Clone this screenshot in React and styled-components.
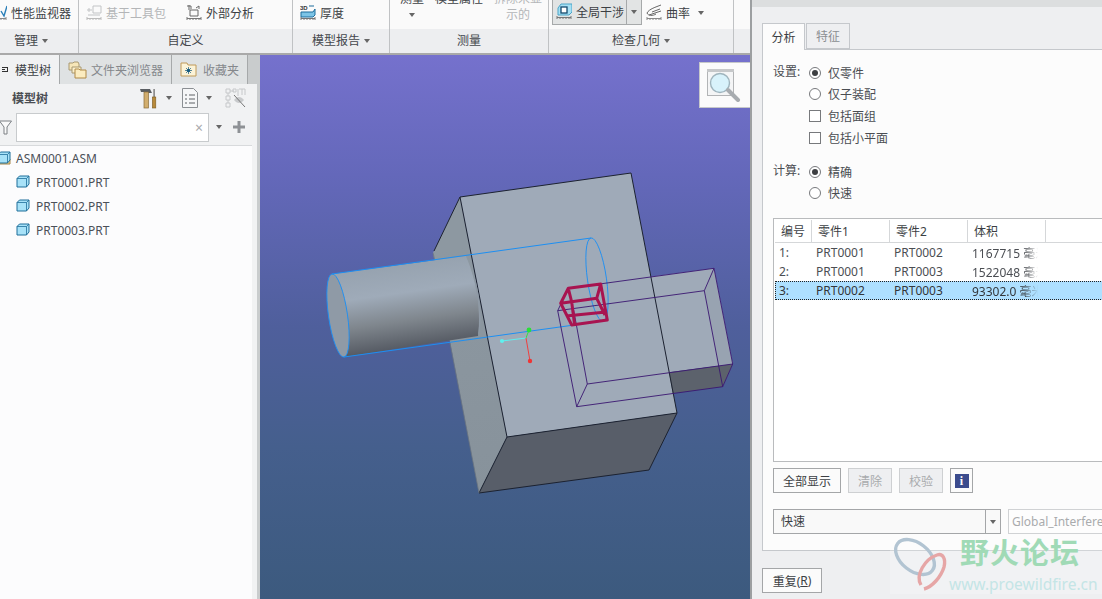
import React from "react";
import styled, { createGlobalStyle } from "styled-components";

const Global = createGlobalStyle`
  html, body { margin: 0; padding: 0; background: #eeeff1; }
  body { font-family: "Noto Sans", "Noto Sans CJK SC", sans-serif; font-size: 12px; color: #3c3f44; }
  * { box-sizing: border-box; }
`;

const Page = styled.div`display: flex; width: 1102px; height: 599px; overflow: hidden;`;
const Main = styled.div`width: 750px; display: flex; flex-direction: column; flex: none;`;

/* ---------- ribbon ---------- */
const Ribbon = styled.div`display: flex; height: 55px; flex: none; border-bottom: 2px solid #a9a9a9; overflow: hidden;`;
const Group = styled.div`
  width: ${p => p.$w}px; flex: none; display: flex; flex-direction: column;
  border-right: 1px solid #c0c2c4; overflow: hidden;
  &:last-child { border-right: none; }
`;
const Tools = styled.div`
  height: 29px; flex: none; display: flex; align-items: center;
  background: #fafafa; padding: 0 0 3px ${p => p.$pl || 0}px; gap: ${p => p.$gap || 0}px;
`;
const GroupLabel = styled.div`
  flex: 1; background: #edeef0; display: flex; align-items: center; justify-content: center;
  gap: 4px; line-height: 24px; color: #44474c; padding-right: ${p => p.$pr || 0}px;
`;
const Caret = styled.span`
  display: inline-block; width: 0; height: 0; flex: none;
  border-left: 3.5px solid transparent; border-right: 3.5px solid transparent;
  border-top: 4px solid ${p => p.$c || "#666"};
`;
const Tool = styled.div`
  display: flex; align-items: center; gap: 4px; flex: none; white-space: nowrap;
  color: ${p => (p.$off ? "#b4b6b8" : "#3c3f44")};
  margin-left: ${p => p.$ml || 0}px;
`;
const TallTool = styled.div`
  display: flex; flex-direction: column; align-items: center; flex: none; align-self: flex-start;
  width: ${p => p.$w}px; margin-top: -9px; line-height: 16px; text-align: center;
  color: ${p => (p.$off ? "#b4b6b8" : "#3c3f44")};
`;
const CaretLine = styled.div`height: 16px; display: flex; align-items: center;`;
const SplitButton = styled.div`
  display: flex; height: 26px; width: 90px; margin-top: -1px; align-self: flex-start; flex: none;
  background: #e2e4e4; border: 1px solid #a6a9aa;
`;
const SplitMain = styled.div`
  width: 74px; flex: none; display: flex; align-items: center; gap: 4px; padding-left: 3px;
  border-right: 1px solid #a6a9aa; white-space: nowrap;
`;
const SplitArrow = styled.div`flex: 1; display: flex; align-items: center; justify-content: center;`;

/* ---------- body ---------- */
const Body = styled.div`flex: 1; display: flex; min-height: 0;`;
const LeftPanel = styled.div`
  width: 260px; flex: none; display: flex; flex-direction: column; background: #f1f2f3;
  border-right: 3px solid #c9cccd; overflow: hidden;
`;
const TabStrip = styled.div`display: flex; height: 29px; flex: none; background: #c9cccd;`;
const PanelTab = styled.div`
  width: ${p => p.$w}px; flex: none; display: flex; align-items: center; gap: ${p => p.$gap || 4}px;
  padding-left: ${p => p.$pl}px; white-space: nowrap;
  color: ${p => (p.$on ? "#3c3f44" : "#85888c")};
  background: ${p => (p.$on ? "#f1f2f3" : "#dfe2e3")};
  border-right: 1px solid #a6a9aa;
`;
const PinMark = styled.span`
  height: 5px; flex: none; position: relative;
  border: 1px solid #333; border-left: none;
  background: linear-gradient(#333,#333) 0 50%/3px 1px no-repeat;
  width: 6px; margin-left: 2px;
`;
const HeadRow = styled.div`
  height: 28px; flex: none; display: flex; align-items: center; padding-left: 12px;
`;
const HeadTitle = styled.div`font-weight: 700; color: #4a4d52; width: 128px; flex: none;`;
const HeadGap = styled.span`width: ${p => p.$w}px; flex: none;`;
const FilterRow = styled.div`height: 30px; flex: none; display: flex; align-items: center;`;
const SearchBox = styled.div`
  width: 193px; height: 29px; margin-left: 4px; flex: none; background: #fff;
  border: 1px solid #c8cbcd; display: flex; align-items: center; justify-content: flex-end;
  padding-right: 5px; color: #a9abad; font-size: 14px; 
`;
const Tree = styled.div`
  flex: 1; margin-right: 5px; margin-top: 3px; background: #fcfcfd; border-top: 1px solid #d8dadc;
`;
const TreeRow = styled.div`
  height: 24px; display: flex; align-items: center; gap: ${p => p.$gap}px; padding-left: ${p => p.$pl}px;
  margin-left: ${p => p.$ml || 0}px; color: #4b5058;
`;

const Viewport = styled.div`
  flex: 1; position: relative; overflow: hidden;
  background: linear-gradient(180deg, #7571cd 0%, #6468ba 22%, #4f5f9c 50%, #455f8d 72%, #3c5a7e 100%);
`;
const SceneSvg = styled.svg`display: block; width: 100%; height: 100%;`;
const ZoomBadge = styled.div`
  position: absolute; right: 0; top: 7px; width: 51px; height: 46px; background: #fbfbfb;
  border: 1px solid #c6c8ca; border-right: none;
`;

/* ---------- dialog ---------- */
const Dialog = styled.div`
  flex: 1; position: relative; background: #eeeff1; border-left: 2px solid #9c9fa1;
  display: flex; flex-direction: column; overflow: hidden;
`;
const DialogTop = styled.div`height: 7px; flex: none; background: #dcdedf;`;
const DTabs = styled.div`display: flex; margin: 16px 0 0 10px; height: 26px; flex: none;`;
const DTab = styled.div`
  display: flex; align-items: center; justify-content: center; flex: none;
  width: ${p => p.$w}px; height: ${p => (p.$on ? 27 : 26)}px;
  background: ${p => (p.$on ? "#fcfcfc" : "#eeeff1")};
  border: 1px solid #c5c8cc; border-bottom: ${p => (p.$on ? "none" : "1px solid #c5c8cc")};
  color: ${p => (p.$on ? "#3c3f44" : "#8b8e92")}; position: relative; z-index: 1;
  margin-right: ${p => (p.$on ? 1 : 0)}px;
`;
const DPanel = styled.div`
  margin-left: 10px; width: 360px; height: 502px; flex: none; background: #fcfcfc;
  border: 1px solid #c5c8cc; padding: 12px 0 0 10px;
`;
const OptionGroup = styled.div`display: flex; margin-bottom: ${p => p.$mb || 0}px;`;
const OptionLabel = styled.div`width: 36px; flex: none; line-height: 20px; color: #4a4d52;`;
const OptionList = styled.div`display: flex; flex-direction: column;`;
const Option = styled.div`
  height: ${p => p.$h}px; display: flex; align-items: center; gap: 7px; color: #4a4d52;
`;
const Radio = styled.span`
  width: 12px; height: 12px; border-radius: 50%; border: 1px solid #77797c; background: #fff; flex: none;
  display: flex; align-items: center; justify-content: center;
  &::after { content: ""; width: 6px; height: 6px; border-radius: 50%; background: ${p => (p.$on ? "#3d3f42" : "transparent")}; }
`;
const Check = styled.span`width: 12px; height: 12px; border: 1px solid #77797c; background: #fff; flex: none;`;

const ListBox = styled.div`
  width: 345px; height: 244px; background: #fff; border: 1px solid #b9bbbd; padding: 1px 0 0 1px; flex: none;
`;
const rowGrid = `display: grid; grid-template-columns: 37px 78px 78px 78px 1fr;`;
const ListHead = styled.div`${rowGrid} height: 23px; border-bottom: 1px solid #d5d7d9;`;
const HeadCell = styled.div`
  display: flex; align-items: center; padding-left: 6px; color: #3c3f44;
  border-right: 1px solid #d5d7d9;
  &:last-child { border-right: none; }
`;
const ListRow = styled.div`
  ${rowGrid} height: 19px; align-items: center; color: #4b4e53;
  ${p => p.$sel && `background: #aee0ff; outline: 1px dotted #222; outline-offset: -1px; color: #33363a;`}
`;
const RowCell = styled.div`padding-left: 4px; white-space: nowrap; overflow: hidden;`;
const FadeCell = styled(RowCell)`
  width: 70px;
  mask-image: linear-gradient(90deg, #000 ${p => p.$solid}px, transparent 70px);
`;
const ButtonRow = styled.div`display: flex; gap: 7px; margin-top: 6px;`;
const Btn = styled.div`
  width: ${p => p.$w}px; height: 25px; flex: none; display: flex; align-items: center; justify-content: center;
  border: 1px solid ${p => (p.$off ? "#ced0d2" : "#a4a6a8")}; background: ${p => (p.$off ? "#eeeff1" : "#fbfbfb")};
  color: ${p => (p.$off ? "#a9abad" : "#3c3f44")};
`;
const InfoGlyph = styled.span`
  width: 14px; height: 14px; background: #3c4c8e; color: #fff; font: 700 12px/14px "Liberation Serif", serif;
  text-align: center;
`;
const ComboRow = styled.div`display: flex; gap: 7px; margin-top: 16px;`;
const Combo = styled.div`
  width: 228px; height: 25px; flex: none; display: flex; border: 1px solid #a4a6a8; background: #f9f9f9;
`;
const ComboText = styled.div`flex: 1; padding-left: 7px; line-height: 24px; color: #3c3f44;`;
const ComboArrow = styled.div`
  width: 15px; flex: none; border-left: 1px solid #a4a6a8; display: flex; align-items: center; justify-content: center;
`;
const NameField = styled.div`
  width: 110px; height: 25px; flex: none; border: 1px solid #d0d2d4; background: #fdfdfd; padding-left: 3px;
  line-height: 23px; color: #a9abad; white-space: nowrap; overflow: hidden;
`;
const Footer = styled.div`margin: 17px 0 0 10px;`;
const Watermark = styled.div`
  position: absolute; left: 138px; top: 534px; width: 214px; height: 60px; background: rgba(255,255,255,.22);
  pointer-events: none;
`;
const WmLogo = styled.svg`position: absolute; left: 1px; top: 1px;`;
const WmTitle = styled.div`
  position: absolute; left: 70px; top: 1px; font: 700 29px/32px "Noto Sans CJK SC", sans-serif; letter-spacing: 1px;
  color: #a0dab6; white-space: nowrap;
`;
const WmUrl = styled.div`
  position: absolute; left: 59px; top: 40px; font: 400 15.5px/20px "Noto Sans", sans-serif; color: #c4e5e6; white-space: nowrap;
`;

/* ---------- icons ---------- */
const Ruler = () => <path d="M1 14.5H15M1 13v3M4 14v2M7 14v2M10 14v2M13 14v2M15 13v3" fill="none" stroke="currentColor" strokeWidth="1" />;
const Ico = styled.svg`flex: none; display: block; color: ${p => p.$c || "#666"}; margin: ${p => p.$m || 0};`;

const IconMonitor = () => (
  <Ico width="16" height="18" viewBox="0 0 16 18" $c="#888"><path d="M10 7l3 5 3-10" fill="none" stroke="#2b7fb8" strokeWidth="1.4" /><Ruler /></Ico>
);
const IconToolkit = () => (
  <Ico width="16" height="18" viewBox="0 0 16 18" $c="#bbb"><path d="M7 2h8v7H7zM1 6h5M3 4v4M2 11h12" fill="none" stroke="#c2c4c6" /><Ruler /></Ico>
);
const IconExternal = () => (
  <Ico width="16" height="18" viewBox="0 0 16 18" $c="#777"><path d="M1 2h4v3M4 6h8v6H4zM10 4l3-2v3M3 1v5" fill="none" stroke="#666" /><Ruler /></Ico>
);
const IconThick = () => (
  <Ico width="16" height="18" viewBox="0 0 16 18" $c="#777">
    <text x="0" y="5.5" fontSize="6" fontWeight="700" fontFamily="Liberation Sans" fill="#333">3D</text>
    <path d="M9 2h5M1 8h12l2-3v6l-2 2H1z" fill="#7cc4e6" stroke="#1d6c9c" /><Ruler />
  </Ico>
);
const IconInterf = () => (
  <Ico width="16" height="18" viewBox="0 0 16 18" $c="#777">
    <path d="M5 1h11v8l-3 3H2V5z" fill="#a6e0f4" stroke="#4aa5c8" /><rect x="5" y="4" width="6" height="6" fill="#fff" stroke="#134a6e" strokeWidth="1.3" /><Ruler />
  </Ico>
);
const IconCurv = () => (
  <Ico width="16" height="18" viewBox="0 0 16 18" $c="#888">
    <path d="M15 1C10 3 3 5 1 9c1 3 6 3 9 1M3 11l12-4M6 8l8-3" fill="none" stroke="#666" /><Ruler />
  </Ico>
);
const IconFolders = () => (
  <Ico width="19" height="19" viewBox="0 0 19 19">
    <path d="M1 3h4l1-1h4l1 2v6H1z" fill="#f6e6b8" stroke="#a89870" /><path d="M4 7h9v6H4z" fill="#fbf0cc" stroke="#a89870" />
    <path d="M7 9h4l1 1h6v8H7z" fill="#fbecc0" stroke="#b08a48" />
  </Ico>
);
const IconFav = () => (
  <Ico width="17" height="15" viewBox="0 0 17 15">
    <path d="M1 3V1h6l1 2h8v11H1z" fill="#fbf3d8" stroke="#c09a58" /><circle cx="8.5" cy="8.5" r="1.7" fill="#155a80" />
    <path d="M8.5 5v7M5 8.5h7M6 6l5 5M11 6l-5 5" stroke="#155a80" strokeWidth=".7" />
  </Ico>
);
const IconHammer = () => (
  <Ico width="17" height="21" viewBox="0 0 17 21">
    <path d="M0 1h10l2 4H7v-1H1z" fill="#5a5e62" /><rect x="4" y="4" width="4.4" height="16" fill="#d2ae6e" stroke="#8a6c38" strokeWidth=".7" />
    <rect x="13.4" y="1" width="1.4" height="9" fill="#777" /><rect x="12.4" y="9" width="3.4" height="11" fill="#b88a3a" stroke="#7a5a20" strokeWidth=".6" />
  </Ico>
);
const IconList = () => (
  <Ico width="16" height="20" viewBox="0 0 16 20">
    <path d="M.5.5h11l4 4v15H.5z" fill="#f5f6f7" stroke="#8b8f93" /><path d="M3 7h2M7 7h6M3 11h2M7 11h6M3 15h2M7 15h6" stroke="#5c6064" />
  </Ico>
);
const IconTreeEye = () => (
  <Ico width="21" height="20" viewBox="0 0 21 20">
    <path d="M1 1h4v4H1zM1 8h4v4H1zM1 15h4v4H1zM5 3h4M8 1h3v3H8zM14 1h6v6M3 5v3M3 12v3M13 1v7M17 1v6" fill="none" stroke="#c6c8ca" />
    <path d="M9 12c3-4 7-4 10 0-3 4-7 4-10 0z" fill="#c8cacc" /><path d="M9 7l11 12" stroke="#777" />
  </Ico>
);
const IconFunnel = () => (
  <Ico width="13" height="15" viewBox="0 0 13 15" $m="0 0 0 -1px">
    <path d="M.5 1h12L8 7v7H5V7z" fill="#fafafa" stroke="#7c8084" />
  </Ico>
);
const IconCube = ({ asm }) => (
  <Ico width="14" height="14" viewBox="0 0 14 14">
    {asm && <path d="M1 8h12v5H1z" fill="#f4d68e" stroke="#a5854a" />}
    <path d="M1 3.5L3.5 1H13v8l-2.5 3H1z" fill="#a8e2f8" stroke="#1f6e9a" />
    <path d="M1 3.5h9.5V12M10.5 3.5L13 1" fill="none" stroke="#1f6e9a" strokeWidth=".8" />
  </Ico>
);
const IconMagnify = () => (
  <Ico width="34" height="33" viewBox="0 0 34 33" $m="6px 0 0 7px">
    <rect x=".5" y=".5" width="26" height="26" fill="#f4f5f6" stroke="#b2b4b6" /><rect x="0" y="0" width="27" height="3" fill="#c6c8ca" />
    <circle cx="13" cy="14" r="9.5" fill="#d8f2fb" stroke="#9fb4bd" strokeWidth="1.4" />
    <path d="M21 21l10 10" stroke="#a8acb0" strokeWidth="4" strokeLinecap="round" />
  </Ico>
);

const GW = { front: "#9faab8", line: "#1c2230", blue: "#1d8ff2", purple: "#3a1670", red: "#a81450" };

const Scene = () => (
  <SceneSvg viewBox="260 55 490 544" preserveAspectRatio="none">
    <defs>
      <linearGradient id="cyl" gradientUnits="userSpaceOnUse" x1="334" y1="272" x2="346" y2="357">
        <stop offset="0" stopColor="#96a2af" /><stop offset=".35" stopColor="#9fabb9" />
        <stop offset=".68" stopColor="#7f868d" /><stop offset="1" stopColor="#555a63" />
      </linearGradient>
      <linearGradient id="side" gradientUnits="userSpaceOnUse" x1="433" y1="253" x2="479" y2="493">
        <stop offset="0" stopColor="#8d98a1" /><stop offset="1" stopColor="#87929b" />
      </linearGradient>
    </defs>
    {/* main block */}
    <polygon points="460,197 433,253 479,493 507,437" fill="url(#side)" />
    <polygon points="460,197 631,173 677,413 507,437" fill={GW.front} />
    <polygon points="507,437 677,413 649,470 479,493" fill="#585e69" />
    {/* protruding prism */}
    <polygon points="650.3,276.7 714,268.3 732.7,364 669,372.3" fill={GW.front} />
    <polygon points="714,268.3 732.7,364 722.7,386.7 704.3,290.7" fill="#98a3b1" />
    <polygon points="732.7,364 722.7,386.7 672.7,393.3 669,372.3" fill="#5c626c" />
    <path d="M460 197L631 173L677 413L507 437ZM460 197L434 251M507 437L479 493L649 470L677 413" fill="none" stroke={GW.line} strokeWidth="1" />
    <path d="M433 253L436 265M450 343L479 493" fill="none" stroke="#6b7580" strokeWidth=".8" />
    {/* cylinder */}
    <path d="M332 274L466 256C476 280 482 310 478 336L344 357Z" fill="url(#cyl)" />
    <path d="M466 256C474 266 482 310 478 336C484 325 480 280 466 256Z" fill="#8f9aa6" />
    <ellipse cx="338" cy="315.5" rx="9.5" ry="42" transform="rotate(-8.2 338 315.5)" fill="#8f9aa6" />
    <ellipse cx="338" cy="315.5" rx="9.5" ry="42" transform="rotate(-8.2 338 315.5)" fill="none" stroke={GW.blue} strokeWidth=".9" />
    <path d="M332 274L591 238M344 357L603 321" fill="none" stroke={GW.blue} strokeWidth="1" />
    <ellipse cx="597" cy="279.5" rx="9.5" ry="42" transform="rotate(-8.2 597 279.5)" fill="none" stroke={GW.blue} strokeWidth=".9" />
    {/* interfering prism outline */}
    <path
      d="M557.7 310.7L576.7 406.7L722.7 386.7L732.7 364L714 268.3L568.3 288.3L557.7 310.7L704.3 290.7L722.7 386.7M714 268.3L704.3 290.7M732.7 364L587.3 384L576.7 406.7M587.3 384L573.3 308.3"
      fill="none" stroke={GW.purple} strokeWidth=".9"
    />
    {/* interference volume */}
    <path
      d="M568.3 288.3L600.7 284L607.3 320L571.7 325L560.7 303.3ZM560.7 303.3L596.7 298.3L600.7 284M596.7 298.3L605 315M568.3 288.3L571.7 302L574.5 324M566 316L606 312"
      fill="none" stroke={GW.red} strokeWidth="3" strokeLinejoin="round"
    />
    {/* csys */}
    <path d="M526 338L529 330" stroke="#35e045" strokeWidth="1" /><circle cx="529" cy="330" r="2.4" fill="#28e038" />
    <path d="M526 338L502 341" stroke="#5ff0ee" strokeWidth="1" /><circle cx="502" cy="341" r="2.1" fill="#5ff0ee" />
    <path d="M526 338L530 361" stroke="#ef4040" strokeWidth="1" /><circle cx="530" cy="361" r="2.2" fill="#ee3535" />
  </SceneSvg>
);

const ROWS = [
  ["1:", "PRT0001", "PRT0002", "1167715 毫米³", 58],
  ["2:", "PRT0001", "PRT0003", "1522048 毫米³", 58],
  ["3:", "PRT0002", "PRT0003", "93302.0 毫米³", 54],
];

export default function App() {
  return (
    <>
      <Global />
      <Page>
        <Main>
          <Ribbon>
            <Group $w={79}>
              <Tools>
                <Tool $ml={-9}><IconMonitor />性能监视器</Tool>
              </Tools>
              <GroupLabel $pr={16}>管理<Caret /></GroupLabel>
            </Group>
            <Group $w={214}>
              <Tools $pl={7} $gap={20}>
                <Tool $off><IconToolkit />基于工具包</Tool>
                <Tool><IconExternal />外部分析</Tool>
              </Tools>
              <GroupLabel>自定义</GroupLabel>
            </Group>
            <Group $w={97}>
              <Tools $pl={7}>
                <Tool><IconThick />厚度</Tool>
              </Tools>
              <GroupLabel>模型报告<Caret /></GroupLabel>
            </Group>
            <Group $w={159}>
              <Tools $pl={10} $gap={11}>
                <TallTool $w={24}>测量<CaretLine><Caret /></CaretLine></TallTool>
                <TallTool $w={48}>模型属性</TallTool>
                <TallTool $w={48} $off>拆除未显示的</TallTool>
              </Tools>
              <GroupLabel>测量</GroupLabel>
            </Group>
            <Group $w={185}>
              <Tools $pl={3} $gap={3}>
                <SplitButton>
                  <SplitMain><IconInterf />全局干涉</SplitMain>
                  <SplitArrow><Caret /></SplitArrow>
                </SplitButton>
                <Tool $ml={1}><IconCurv />曲率<HeadGap $w={0} /><Caret /></Tool>
              </Tools>
              <GroupLabel>检查几何<Caret /></GroupLabel>
            </Group>
            <Group $w={16}>
              <Tools />
              <GroupLabel />
            </Group>
          </Ribbon>
          <Body>
            <LeftPanel>
              <TabStrip>
                <PanelTab $on $w={60} $pl={0} $gap={7}><PinMark />模型树</PanelTab>
                <PanelTab $w={112} $pl={8}><IconFolders />文件夹浏览器</PanelTab>
                <PanelTab $w={76} $pl={8} $gap={6}><IconFav />收藏夹</PanelTab>
              </TabStrip>
              <HeadRow>
                <HeadTitle>模型树</HeadTitle>
                <IconHammer />
                <HeadGap $w={9} /><Caret />
                <HeadGap $w={10} />
                <IconList />
                <HeadGap $w={8} /><Caret />
                <HeadGap $w={13} />
                <IconTreeEye />
              </HeadRow>
              <FilterRow>
                <IconFunnel />
                <SearchBox>×</SearchBox>
                <HeadGap $w={7} /><Caret />
                <HeadGap $w={11} />
                <Ico width="12" height="12" viewBox="0 0 12 12"><path d="M6 0v12M0 6h12" stroke="#8e9195" strokeWidth="3" /></Ico>
              </FilterRow>
              <Tree>
                <TreeRow $pl={0} $ml={-3} $gap={5}><IconCube asm />ASM0001.ASM</TreeRow>
                <TreeRow $pl={16} $gap={6}><IconCube />PRT0001.PRT</TreeRow>
                <TreeRow $pl={16} $gap={6}><IconCube />PRT0002.PRT</TreeRow>
                <TreeRow $pl={16} $gap={6}><IconCube />PRT0003.PRT</TreeRow>
              </Tree>
            </LeftPanel>
            <Viewport>
              <Scene />
              <ZoomBadge><IconMagnify /></ZoomBadge>
            </Viewport>
          </Body>
        </Main>
        <Dialog>
          <DialogTop />
          <DTabs>
            <DTab $on $w={43}>分析</DTab>
            <DTab $w={44}>特征</DTab>
          </DTabs>
          <DPanel>
            <OptionGroup $mb={12}>
              <OptionLabel>设置:</OptionLabel>
              <OptionList>
                <Option $h={22}><Radio $on />仅零件</Option>
                <Option $h={20}><Radio />仅子装配</Option>
                <Option $h={23}><Check />包括面组</Option>
                <Option $h={22}><Check />包括小平面</Option>
              </OptionList>
            </OptionGroup>
            <OptionGroup $mb={15}>
              <OptionLabel>计算:</OptionLabel>
              <OptionList>
                <Option $h={21}><Radio $on />精确</Option>
                <Option $h={21}><Radio />快速</Option>
              </OptionList>
            </OptionGroup>
            <ListBox>
              <ListHead>
                <HeadCell>编号</HeadCell><HeadCell>零件1</HeadCell><HeadCell>零件2</HeadCell><HeadCell>体积</HeadCell><HeadCell />
              </ListHead>
              {ROWS.map(r => (
                <ListRow key={r[0]} $sel={r[0] === "3:"}>
                  <RowCell>{r[0]}</RowCell><RowCell>{r[1]}</RowCell><RowCell>{r[2]}</RowCell>
                  <FadeCell $solid={r[4]}>{r[3]}</FadeCell>
                </ListRow>
              ))}
            </ListBox>
            <ButtonRow>
              <Btn $w={68}>全部显示</Btn>
              <Btn $w={44} $off>清除</Btn>
              <Btn $w={44} $off>校验</Btn>
              <Btn $w={23}><InfoGlyph>i</InfoGlyph></Btn>
            </ButtonRow>
            <ComboRow>
              <Combo>
                <ComboText>快速</ComboText>
                <ComboArrow><Caret /></ComboArrow>
              </Combo>
              <NameField>Global_Interference</NameField>
            </ComboRow>
          </DPanel>
          <Footer><Btn $w={60}>重复(<u>R</u>)</Btn></Footer>
          <Watermark>
            <WmLogo width="62" height="58" viewBox="0 0 62 58">
              <ellipse cx="24" cy="22" rx="22" ry="14" transform="rotate(38 24 22)" fill="none" stroke="#b2c4d2" strokeWidth="3.4" />
              <path d="M30 50C24 40 34 24 46 20c6-2 9 4 7 12-3 10-12 20-20 22" fill="none" stroke="#e6a6a6" strokeWidth="3.4" />
            </WmLogo>
            <WmTitle>野火论坛</WmTitle>
            <WmUrl>www.proewildfire.cn</WmUrl>
          </Watermark>
        </Dialog>
      </Page>
    </>
  );
}
